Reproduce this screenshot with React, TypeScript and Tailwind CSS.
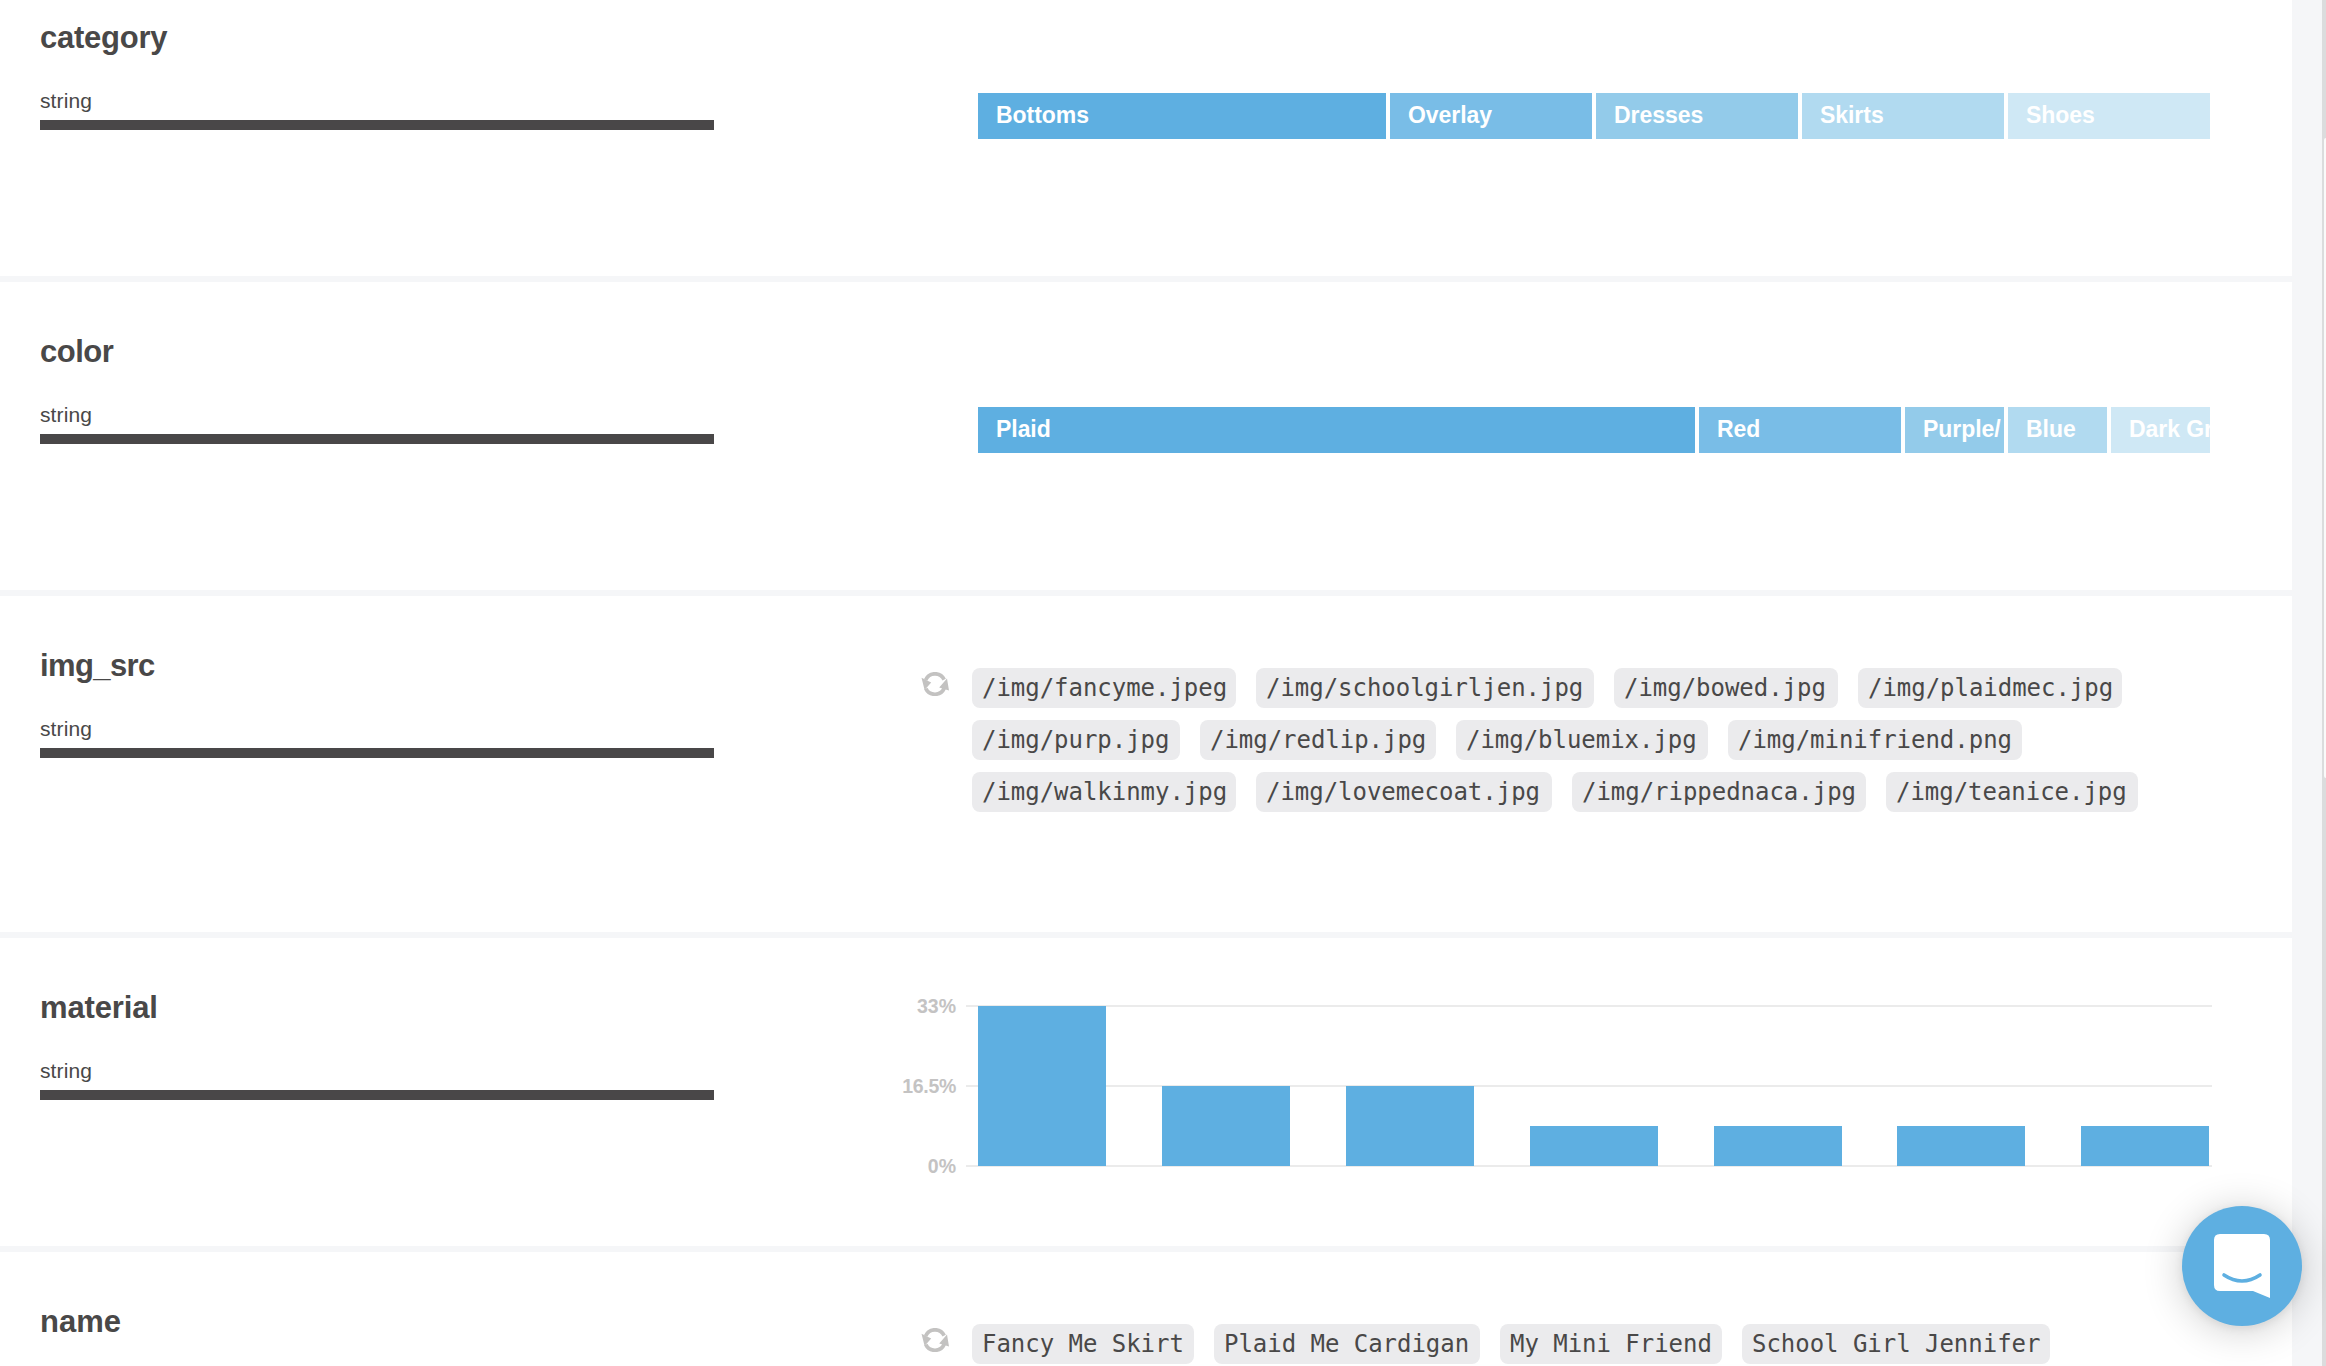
import type { ReactNode } from 'react';

type Segment = { label: string; width: string; color: string };
type Tag = { text: string; width: string };

const categorySegments: Segment[] = [
  { label: 'Bottoms', width: 'w-[408px]', color: 'bg-[#5eafe1]' },
  { label: 'Overlay', width: 'w-[202px]', color: 'bg-[#79bde7]' },
  { label: 'Dresses', width: 'w-[202px]', color: 'bg-[#93cbea]' },
  { label: 'Skirts', width: 'w-[202px]', color: 'bg-[#b1daf0]' },
  { label: 'Shoes', width: 'w-[202px]', color: 'bg-[#cfe8f5]' },
];

const colorSegments: Segment[] = [
  { label: 'Plaid', width: 'w-[717px]', color: 'bg-[#5eafe1]' },
  { label: 'Red', width: 'w-[202px]', color: 'bg-[#79bde7]' },
  { label: 'Purple/', width: 'w-[99px]', color: 'bg-[#93cbea]' },
  { label: 'Blue', width: 'w-[99px]', color: 'bg-[#b1daf0]' },
  { label: 'Dark Green', width: 'w-[99px]', color: 'bg-[#cfe8f5]' },
];

const imageTags: Tag[][] = [
  [
    { text: '/img/fancyme.jpeg', width: 'w-[264px]' },
    { text: '/img/schoolgirljen.jpg', width: 'w-[338px]' },
    { text: '/img/bowed.jpg', width: 'w-[224px]' },
    { text: '/img/plaidmec.jpg', width: 'w-[264px]' },
  ],
  [
    { text: '/img/purp.jpg', width: 'w-[208px]' },
    { text: '/img/redlip.jpg', width: 'w-[236px]' },
    { text: '/img/bluemix.jpg', width: 'w-[252px]' },
    { text: '/img/minifriend.png', width: 'w-[294px]' },
  ],
  [
    { text: '/img/walkinmy.jpg', width: 'w-[264px]' },
    { text: '/img/lovemecoat.jpg', width: 'w-[296px]' },
    { text: '/img/rippednaca.jpg', width: 'w-[294px]' },
    { text: '/img/teanice.jpg', width: 'w-[252px]' },
  ],
];

const nameTags: Tag[][] = [
  [
    { text: 'Fancy Me Skirt', width: 'w-[222px]' },
    { text: 'Plaid Me Cardigan', width: 'w-[266px]' },
    { text: 'My Mini Friend', width: 'w-[222px]' },
    { text: 'School Girl Jennifer', width: 'w-[308px]' },
  ],
];

const bars = [
  { x: 12, h: 160 },
  { x: 196, h: 80 },
  { x: 380, h: 80 },
  { x: 564, h: 40 },
  { x: 748, h: 40 },
  { x: 931, h: 40 },
  { x: 1115, h: 40 },
];

type RowProps = { name: string; height: string; tracking: string; children: ReactNode };

function Row({ name, height, tracking, children }: RowProps) {
  return (
    <section className={`flex shrink-0 border-b-[6px] border-[#f5f6f8] bg-white pl-10 ${height}`}>
      <div className="w-[674px] shrink-0 pt-[52px]">
        <h2 className={`h-9 text-[31px] leading-9 font-bold ${tracking}`}>{name}</h2>
        <p className="mt-7 h-9 text-[21px] leading-[34px] tracking-[0.1px]">string</p>
        <div className="h-[10px] bg-[#494748]" />
      </div>
      {children}
    </section>
  );
}

function StackedBar({ segments }: { segments: Segment[] }) {
  return (
    <div className="mt-[125px] ml-[264px] flex h-[46px] gap-1">
      {segments.map((s) => (
        <div
          key={s.label}
          className={`shrink-0 overflow-hidden pl-[18px] text-[23px] leading-[44px] font-bold tracking-[-0.05px] whitespace-nowrap text-white ${s.width} ${s.color}`}
        >
          {s.label}
        </div>
      ))}
    </div>
  );
}

function RefreshIcon() {
  return (
    <svg className="h-6 w-7" viewBox="0 0 28 24" fill="none">
      <path d="M4.6 8A10.2 10.2 0 0 1 23.2 7.6M23.2 16.4A10.2 10.2 0 0 1 4.8 16.6" stroke="#c3c2c1" strokeWidth="3.7" />
      <path d="M0.5 5.8L10.2 10.4L3.6 17.9ZM26 6.6L28 18.6L18.2 15.4Z" fill="#c3c2c1" />
    </svg>
  );
}

function TagList({ rows }: { rows: Tag[][] }) {
  return (
    <div className="ml-[207px] flex pt-[72px]">
      <div className="mt-1 w-[51px]">
        <RefreshIcon />
      </div>
      <div className="flex flex-col gap-3">
        {rows.map((row) => (
          <div key={row[0].text} className="flex gap-5">
            {row.map((tag) => (
              <code
                key={tag.text}
                className={`h-10 shrink-0 rounded-lg bg-[#ebebed] pl-[10px] font-['DejaVu_Sans_Mono',monospace] text-[24px] leading-[41px] tracking-[-0.03px] whitespace-nowrap ${tag.width}`}
              >
                {tag.text}
              </code>
            ))}
          </div>
        ))}
      </div>
    </div>
  );
}

function BarChart() {
  return (
    <div className="ml-[182px] flex pt-[67px]">
      <div className="-mt-[11px] flex h-[184px] w-[60px] flex-col justify-between text-right text-[19.5px] leading-6 font-bold text-[#c4c3c3]">
        <span>33%</span>
        <span className="tracking-[-0.3px]">16.5%</span>
        <span>0%</span>
      </div>
      <svg className="ml-[10px] h-[162px] w-[1246px]" viewBox="0 0 1246 162" shapeRendering="crispEdges">
        {[0, 80, 160].map((y) => (
          <rect key={y} x="0" y={y} width="1246" height="2" fill="#ebebeb" />
        ))}
        {bars.map(({ x, h }) => (
          <rect key={x} x={x} y={161 - h} width="128" height={h} fill="#5eafe1" />
        ))}
      </svg>
    </div>
  );
}

function ChatLauncher() {
  return (
    <button
      aria-label="Open chat"
      className="absolute right-6 bottom-10 size-[120px] rounded-full bg-[#5eafe1] shadow-[0_2px_10px_rgba(0,0,0,0.07),0_4px_40px_rgba(0,0,0,0.2)]"
    >
      <svg className="size-[120px]" viewBox="0 0 120 120" fill="none">
        <path d="M38 28H82Q88 28 88 34V92L71 85H38Q32 85 32 79V34Q32 28 38 28Z" fill="#fff" />
        <path d="M42 69Q60 81 78 69" stroke="#5eafe1" strokeWidth="3.6" strokeLinecap="round" />
      </svg>
    </button>
  );
}

export default function App() {
  return (
    <div className="relative flex h-[1366px] w-[2326px] overflow-hidden bg-[#f5f6f8] font-['Liberation_Sans',Arial,sans-serif] text-[#494848]">
      <main className="-mt-8 flex h-[1700px] w-[2292px] shrink-0 flex-col">
        <Row name="category" height="h-[314px]" tracking="tracking-[-0.25px]">
          <StackedBar segments={categorySegments} />
        </Row>
        <Row name="color" height="h-[314px]" tracking="tracking-[-0.5px]">
          <StackedBar segments={colorSegments} />
        </Row>
        <Row name="img_src" height="h-[342px]" tracking="tracking-[-0.6px]">
          <TagList rows={imageTags} />
        </Row>
        <Row name="material" height="h-[314px]" tracking="tracking-[-0.15px]">
          <BarChart />
        </Row>
        <Row name="name" height="h-[314px]" tracking="tracking-normal">
          <TagList rows={nameTags} />
        </Row>
      </main>
      <div className="ml-[30px] h-full w-1 bg-[#dbdcdd] pt-[138px] pl-0.5">
        <div className="h-[640px] rounded-l-sm bg-[#fafafa]" />
      </div>
      <ChatLauncher />
    </div>
  );
}
